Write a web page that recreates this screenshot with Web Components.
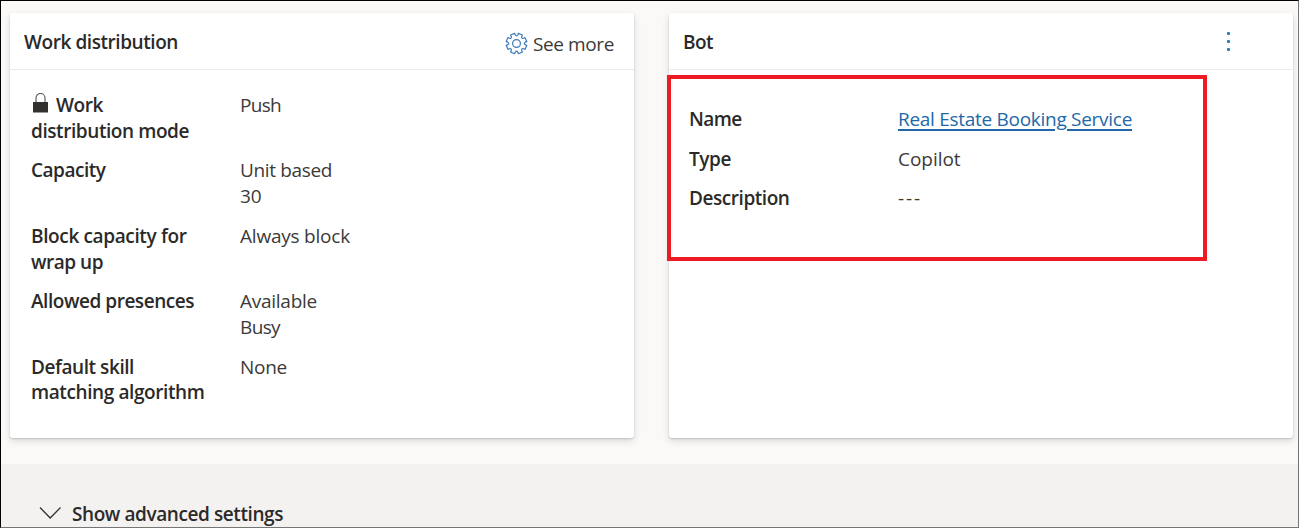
<!DOCTYPE html>
<html lang="en"><head><meta charset="utf-8"><title>Workstream settings</title>
<style>
html,body{margin:0;height:528px;overflow:hidden}
body{font:19px/25.8px "Open Sans","Noto Sans",sans-serif;color:#3b3a39}
</style></head><body>
<settings-page>
  <info-card heading="Work distribution">
    <see-more slot="action"></see-more>
    <field-row><lock-icon slot="label"></lock-icon><fit-text slot="label" w="46">Work</fit-text><br slot="label"><fit-text slot="label" w="157">distribution mode</fit-text><fit-text w="40">Push</fit-text></field-row>
    <field-row><fit-text slot="label" w="73.5">Capacity</fit-text><fit-text w="91">Unit based</fit-text><br><fit-text w="20.5">30</fit-text></field-row>
    <field-row><fit-text slot="label" w="154.5">Block capacity for</fit-text><br slot="label"><fit-text slot="label" w="71">wrap up</fit-text><fit-text w="109">Always block</fit-text></field-row>
    <field-row><fit-text slot="label" w="162">Allowed presences</fit-text><fit-text w="76">Available</fit-text><br><fit-text w="39">Busy</fit-text></field-row>
    <field-row><fit-text slot="label" w="102">Default skill</fit-text><br slot="label"><fit-text slot="label" w="172.5">matching algorithm</fit-text><fit-text w="46">None</fit-text></field-row>
  </info-card>
  <info-card heading="Bot" highlighted>
    <more-button slot="action"></more-button>
    <field-row><fit-text slot="label" w="51.5">Name</fit-text><fit-text w="233" link>Real Estate Booking Service</fit-text></field-row>
    <field-row><fit-text slot="label" w="41">Type</fit-text><fit-text w="61.5">Copilot</fit-text></field-row>
    <field-row><fit-text slot="label" w="99.5">Description</fit-text><fit-text w="23">---</fit-text></field-row>
  </info-card>
  <advanced-toggle slot="footer"></advanced-toggle>
</settings-page>
<script>
const define=(name,html,setup)=>customElements.define(name,class extends HTMLElement{
  constructor(){super();this.attachShadow({mode:'open'}).innerHTML=html;}
  connectedCallback(){if(setup)setup(this,this.shadowRoot);}
});

define('settings-page',`<style>
:host{display:flex;flex-direction:column;box-sizing:border-box;width:1299px;height:528px;border:1px solid #000;border-right-color:#757575;border-bottom-color:#757575;background:#faf9f8;overflow:hidden}
main{display:grid;grid-template-columns:624px 624px;column-gap:35px;height:425px;padding:12px 5px 26px 9px;flex:none}
</style><main><slot></slot></main><slot name="footer"></slot>`);

define('info-card',`<style>
:host{display:block;background:#fff;border-radius:3px;box-shadow:0 3px 7px rgba(0,0,0,.13),0 1px 2px rgba(0,0,0,.14);position:relative}
header{display:flex;justify-content:space-between;box-sizing:border-box;height:57px;padding:17px 20px 0 14px;border-bottom:1px solid #edebe9;font-weight:600;color:#2b2a29}
section{display:flex;flex-direction:column;gap:13.8px;padding:23px 21px 0}
:host([highlighted]) section{padding:37px 20px 0}
.mark{display:none}
:host([highlighted]) .mark{display:block;position:absolute;left:-2px;top:62px;width:540px;height:186px;box-sizing:border-box;border:4px solid #ed1c24}
</style><header><fit-text></fit-text><slot name="action"></slot></header><section><slot></slot></section><div class="mark"></div>`,(el,r)=>{
  const t=r.querySelector('fit-text');t.textContent=el.getAttribute('heading');t.setAttribute('w',t.textContent==='Bot'?'29':'153');
});

define('field-row',`<style>
:host{display:grid;grid-template-columns:209px 1fr}
.label{font-weight:600;color:#2b2a29}
</style><div class="label"><slot name="label"></slot></div><div><slot></slot></div>`);

define('lock-icon',`<style>:host{display:inline-block;width:25px;height:20px;vertical-align:-1px}svg{display:block}</style>
<svg width="20" height="20" viewBox="0 0 20 20"><path d="M2 9h15v10.5H2z" fill="#323130"/><path d="M5 9V5a4.5 4.5 0 0 1 9 0v4" fill="none" stroke="#605e5c" stroke-width="1.2"/></svg>`);

define('see-more',`<style>:host{display:flex;gap:5px;font-weight:400;color:#3b3a39;height:26px}svg{margin-top:1.5px}fit-text{margin-top:2px}</style>
<svg width="23" height="23" viewBox="-11.5 -11.5 23 23" fill="none" stroke="#3b7ab8" stroke-width="1.2" stroke-linejoin="round"><path class="gear"/><circle r="3.9"/></svg><fit-text w="80">See more</fit-text>`,(el,r)=>{
  const at=(radius,deg)=>{const a=deg*Math.PI/180;return (radius*Math.cos(a)).toFixed(2)+' '+(radius*Math.sin(a)).toFixed(2);};
  let d='';
  for(let i=0;i<8;i++){
    const c=i*45+22.5;
    d+=(i?'L':'M')+at(10.4,c-12)+'L'+at(10.4,c+12)+'L'+at(8.9,c+14)+'Q'+at(6.6,c+22.5)+' '+at(8.9,c+31);
  }
  r.querySelector('.gear').setAttribute('d',d+'Z');
});

define('more-button',`<style>:host{display:flex;flex-direction:column;gap:5.4px;width:3px;padding:1.5px 43.5px 0 0}i{width:3px;height:3px;background:#3277b5;border-radius:1px;flex:none}</style><i></i><i></i><i></i>`);

define('advanced-toggle',`<style>
:host{display:flex;flex:1;gap:10px;padding:38px 0 0 38px;background:#f3f2f1;font-weight:600;color:#2b2a29}
svg{margin-top:4px}
</style><svg width="23" height="14" viewBox="0 0 23 14" fill="none" stroke="#323130" stroke-width="1.3"><path d="M1 1.5 11.2 12 21.5 1.5"/></svg><fit-text w="210">Show advanced settings</fit-text>`);

/* Inline text whose letter spacing is tuned to a given advance width. */
define('fit-text',`<style>:host{display:inline-block;white-space:nowrap;vertical-align:top}
:host([link]){color:#2268a8}
:host([link]) span{text-decoration:underline;text-decoration-thickness:1.5px;text-underline-offset:3px}</style><span><slot></slot></span>`,(el,r)=>{
  const fit=()=>{
    const w=+el.getAttribute('w'),s=r.querySelector('span');
    if(!w)return;
    s.style.letterSpacing='0px';
    const n=el.textContent.length;
    s.style.letterSpacing=((w+1-s.getBoundingClientRect().width)/n).toFixed(3)+'px';
  };
  fit();requestAnimationFrame(fit);
});
</script></body></html>
